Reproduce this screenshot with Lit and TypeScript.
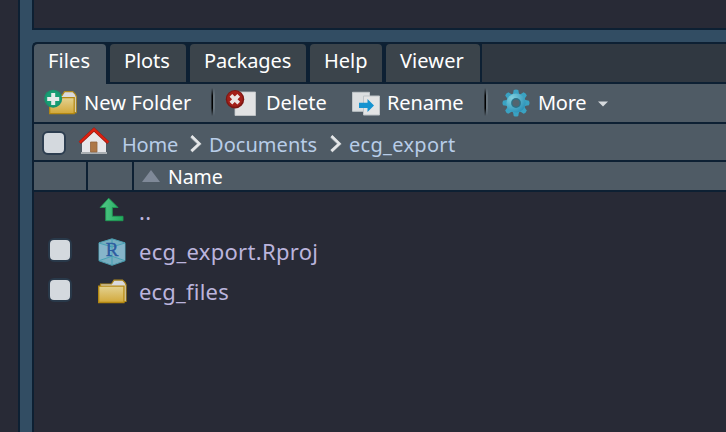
import { LitElement, html, css, svg } from "lit";
import { customElement } from "lit/decorators.js";
import { styleMap } from "lit/directives/style-map.js";

const tabs = [
  { name: "Files", width: 72, spacing: 0.1 },
  { name: "Plots", width: 76, spacing: -0.1 },
  { name: "Packages", width: 116, spacing: -0.1 },
  { name: "Help", width: 72, spacing: 0 },
  { name: "Viewer", width: 94, spacing: 0.1 },
];

const defs = svg`<defs>
  <linearGradient id="gold" x1="0" y1="0" x2="0" y2="1"><stop offset="0" stop-color="#e3d291"/><stop offset="1" stop-color="#d2a83a"/></linearGradient>
  <linearGradient id="green" x1="0" y1="0" x2="1" y2="0"><stop offset="0" stop-color="#54c98a"/><stop offset="1" stop-color="#21ab5d"/></linearGradient>
  <radialGradient id="teal" gradientUnits="userSpaceOnUse" cx="-4" cy="-5" r="17"><stop offset="0" stop-color="#7fd0de"/><stop offset="1" stop-color="#258cb4"/></radialGradient>
</defs>`;

const folderShape = svg`
  <path d="M2.500 7V5h11l2.500-3.800h8.500l2.500 2.500 1 2V22.500h-4z" fill="#d9d9dc" stroke="#b08a1c" stroke-width="1.200"/>
  <path d="M26 6.500h1.500v15.500h-1.500z" fill="#ded6bb"/>
  <path d="M.7 7.200h25.300v16.300H.7z" fill="url(#gold)" stroke="#b58912" stroke-width="1.300"/>`;

const folder = html`<svg width="30" height="25" viewBox="0 0 30 25">${defs}${folderShape}</svg>`;

const newFolder = html`<svg width="34" height="28" viewBox="0 0 34 28">${defs}
  <g transform="translate(5 1.500) scale(.97 .98)">${folderShape}</g>
  <circle cx="9.200" cy="9.700" r="9" fill="#17946d"/><circle cx="9.200" cy="9.400" r="7.500" fill="#189d74"/>
  <path d="M7.200 4h4v4h4v4h-4v4h-4v-4h-4v-4h4z" fill="#e5ebe9"/></svg>`;

const deleteIcon = html`<svg width="31" height="28" viewBox="0 0 31 28">
  <path d="M10 4h20.500v23.500H10z" fill="#e1e2e3" stroke="#c6cacd" stroke-width=".8"/>
  <circle cx="10" cy="11.300" r="9.200" fill="#7c1713"/><circle cx="9.900" cy="10.800" r="7.900" fill="#a31f19"/>
  <path d="M5.900 7.300l7.800 7.800M13.700 7.300l-7.800 7.800" stroke="#ece4e3" stroke-width="3.800"/></svg>`;

const renameIcon = html`<svg width="29" height="25" viewBox="0 0 29 25">
  <path d="M.5 1.300h17v19H.5z" fill="#dcdfe1" stroke="#bfc5c9"/>
  <path d="M11.500 5h16v19H11.500z" fill="#e3e4e5" stroke="#bfc5c9"/>
  <path d="M7 11.800h8.500V8l6.500 6.500-6.500 6.500v-4h-8.500z" fill="#1693d0"/></svg>`;

const toothAngles = [0, 45, 90, 135, 180, 225, 270, 315];
const gear = html`<svg width="28" height="28" viewBox="-14 -14 28 28">${defs}
  <g fill="#3aa2c2">
    ${toothAngles.map((a) => svg`<path d="M-4.200-7.500Q-2.500-9.500-2.300-13Q0-14.200 2.300-13Q2.500-9.500 4.200-7.500z" transform="rotate(${a})"/>`)}
  </g>
  <circle r="9.600" fill="url(#teal)"/><circle r="4.900" fill="#2d7287"/><circle r="3.500" fill="#53646f"/></svg>`;

const home = html`<svg width="32" height="28" viewBox="0 0 32 28">
  <path d="M4 14L16 3.500 28 14v12.500H4z" fill="#e7e7ea"/><path d="M3 25h26v2H3z" fill="#a9aeb2"/>
  <path d="M12.500 15h6.500V25h-6.500z" fill="#ad7748" stroke="#93653f" stroke-width=".8"/>
  <path d="M1.800 15.800L16 2.500 30.200 15.800" fill="none" stroke="#951c12" stroke-width="3.300"/>
  <path d="M1.800 15.500L16 2.300 30.200 15.500" fill="none" stroke="#dc2010" stroke-width="2.300"/></svg>`;

const chevron = html`<svg class="chevron" width="12" height="18" viewBox="0 0 12 18">
  <path d="M1.300 1.500L9.300 9l-8 7.300" fill="none" stroke="#929aa0" stroke-width="3.300"/>
  <path d="M1.500 1L9.300 8.700l-7.800 7.300" fill="none" stroke="#e4e6e8" stroke-width="2.500"/></svg>`;

const upArrow = html`<svg width="26" height="26" viewBox="0 0 26 26">${defs}
  <path d="M9.700 1.200L1.200 10.500h5.500v13.200h17.300v-4.400H13.300V10.500h5.700z" fill="url(#green)" stroke="#1f9b55" stroke-width=".9"/></svg>`;

const rproj = html`<svg width="28" height="28" viewBox="0 0 28 28">
  <path d="M14 .8l13 4v18l-13 4.500-13-4.500v-18z" fill="#78aec0" stroke="#4d9cae"/>
  <path d="M1 4.800l13 4 13-4v18l-13-4.300-13 4.300z" fill="#8db9cf" opacity=".65"/>
  <path d="M14 1v26M1 5l13 4 13-4M1 22.700l13-4.500 13 4.500" fill="none" stroke="#379daf" stroke-width=".8"/>
  <text x="14.200" y="17.500" class="r-letter" text-anchor="middle">R</text></svg>`;

@customElement("app-root")
export class AppRoot extends LitElement {
  static styles = css`
    :host { display: flex; width: 726px; height: 432px; overflow: hidden; background: #324d63;
      font: 20px/24px "Noto Sans", sans-serif; color: #fff; }
    * { box-sizing: border-box; }
    svg { display: block; flex: none; overflow: visible; }
    .source { width: 20px; flex: none; background: #282a36; border-right: 2px solid #0d2033; }
    .column { flex: 1; margin-left: 12px; display: flex; flex-direction: column; min-width: 0; }
    .upper { height: 30px; flex: none; background: #282a36; border: solid #0d2033; border-width: 0 0 2px 2px; margin-bottom: 12px; }
    .pane { flex: 1; border: solid #0d2033; border-width: 2px 0 0 2px; border-top-left-radius: 5px;
      background: #282a36; display: flex; flex-direction: column; overflow: hidden; }
    .tabs { height: 40px; flex: none; display: flex; gap: 4px; background: #0d2033; }
    .tab { height: 38px; flex: none; padding: 5px 0 0 14px; background: #3b444b; border-radius: 4px 4px 0 0; white-space: nowrap; }
    .tab.active { height: 40px; background: #4f5b65; }
    .filler { flex: 1; height: 38px; margin-left: -2px; background: #303841; }
    .toolbar { height: 40px; flex: none; display: flex; background: #4f5b65; border-bottom: 2px solid #0d2033; padding-left: 10px; }
    .action { display: flex; white-space: nowrap; }
    .action span { margin-top: 7px; }
    .separator { width: 4px; height: 28px; margin-top: 4px; flex: none;
      background: linear-gradient(90deg, transparent 0 0.5px, #0008 0.5px 1px, #000 1px 2.5px, #68747d 2.5px); 
      mask-image: linear-gradient(transparent, #000 28%, #000 72%, transparent); }
    .crumbs { height: 38px; flex: none; display: flex; background: #4f5b65; border-bottom: 2px solid #0d2033; padding-left: 8px; color: #b8cde8; white-space: nowrap; }
    .crumbs > span { margin-top: 9px; }
    .chevron { margin-top: 11px; }
    .check { width: 24px; height: 24px; flex: none; background: #d4d9de; border: 2px solid #2d3e50; border-radius: 6px; }
    .crumbs .check { margin-top: 7px; }
    .header { height: 30px; flex: none; display: flex; background: #0d2033; gap: 2px; padding-bottom: 2px; font-size: 19.500px; }
    .header div { background: #4f5b65; }
    .header .select { width: 52px; }
    .header .type { width: 44px; }
    .header .name { flex: 1; display: flex; padding: 3px 0 0 8px; }
    .row { height: 40px; flex: none; display: flex; align-items: center; color: #bbb4dd; white-space: nowrap; font-size: 22px; }
    .row > span { margin-bottom: 2px; }
    .row .choice { width: 64px; padding-left: 14px; flex: none; }
    .row .icon { width: 41px; flex: none; }
    .row .check { margin-top: -4px; border-color: #29394a; }
    .r-letter { font: 19px "Liberation Serif", serif; fill: #2c5ba0; stroke: #2c5ba0; stroke-width: .4; }
  `;

  private label(text: string, width: number, spacing: number) {
    return html`<span style=${styleMap({ width: `${width}px`, letterSpacing: `${spacing}px` })}>${text}</span>`;
  }

  render() {
    return html`
      <div class="source"></div>
      <div class="column">
        <div class="upper"></div>
        <div class="pane">
          <div class="tabs">
            ${tabs.map((t, i) => html`<div class="tab ${i === 0 ? "active" : ""}"
              style=${styleMap({ width: `${t.width}px`, letterSpacing: `${t.spacing}px` })}>${t.name}</div>`)}
            <div class="filler"></div>
          </div>
          <div class="toolbar">
            <div class="action" style="padding-top:5px">${newFolder}</div>
            <div class="action" style="margin-left:6px">${this.label("New Folder", 127, 0.1)}</div>
            <div class="separator"></div>
            <div class="action" style="padding:4px 0 0 10px">${deleteIcon}</div>
            <div class="action" style="margin-left:10px">${this.label("Delete", 86, 0)}</div>
            <div class="action" style="padding-top:7px">${renameIcon}</div>
            <div class="action" style="margin-left:6px">${this.label("Rename", 97, -0.15)}</div>
            <div class="separator"></div>
            <div class="action" style="padding:5px 0 0 14px">${gear}</div>
            <div class="action" style="margin-left:8px">${this.label("More", 60, -0.3)}</div>
            <svg width="10" height="6" viewBox="0 0 10 6" style="margin-top:17px"><path d="M0 .5h10L5 5.500z" fill="#d6dadd"/></svg>
          </div>
          <div class="crumbs">
            <div class="check"></div>
            <div style="padding:3px 0 0 12px">${home}</div>
            <div style="width:12px"></div>
            ${this.label("Home", 68, -0.2)}${chevron}<div style="width:7px"></div>
            ${this.label("Documents", 121, 0.05)}${chevron}<div style="width:7px"></div>
            ${this.label("ecg_export", 120, 0.3)}
          </div>
          <div class="header">
            <div class="select"></div>
            <div class="type"></div>
            <div class="name">
              <svg width="18" height="12" viewBox="0 0 18 12" style="margin-top:5px"><path d="M0 12L9 0l9 12z" fill="#7f8998"/></svg>
              <div style="width:8px"></div>${this.label("Name", 70, -0.1)}
            </div>
          </div>
          <div class="row"><div class="choice"></div><div class="icon" style="padding:0 0 4px 1px">${upArrow}</div>${this.label("..", 30, 0.3)}</div>
          <div class="row"><div class="choice"><div class="check"></div></div><div class="icon">${rproj}</div>${this.label("ecg_export.Rproj", 220, 0.3)}</div>
          <div class="row"><div class="choice"><div class="check"></div></div><div class="icon" style="padding-bottom:2px">${folder}</div>${this.label("ecg_files", 120, 0.2)}</div>
        </div>
      </div>`;
  }
}
